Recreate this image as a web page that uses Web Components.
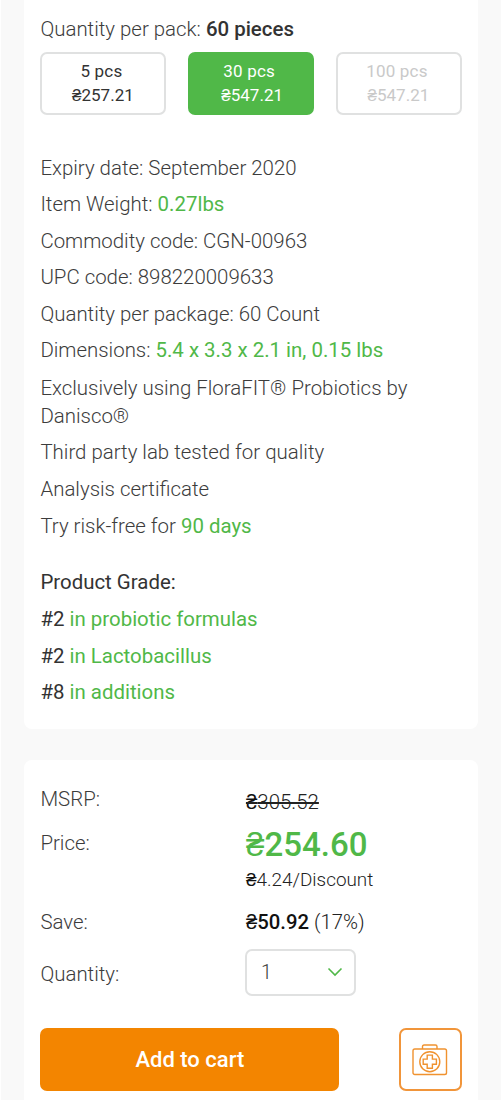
<!DOCTYPE html>
<html lang="en">
<head>
<meta charset="utf-8">
<title>Product details</title>
<style>
html,body{margin:0;padding:0}
body{height:1100px;overflow:hidden;background:#f9f9f9;font-family:Roboto,"Liberation Sans",sans-serif}
</style>
</head>
<body>
<product-page></product-page>
<script>
const define=(name,html)=>{
  const t=document.createElement('template');
  t.innerHTML=html;
  customElements.define(name,class extends HTMLElement{
    constructor(){super();this.attachShadow({mode:'open'}).append(t.content.cloneNode(true));}
  });
};

define('ui-card',`<style>
:host{display:block;flex:none;box-sizing:border-box;background:#fff;border-radius:8px;padding:0 16.4px}
</style><slot></slot>`);

define('pack-option',`<style>
:host{display:flex;flex-direction:column;align-items:center;justify-content:center;box-sizing:border-box;width:126px;height:63px;border:2px solid #e0e1e1;border-radius:7px;font-size:17px;line-height:24px;color:#333;padding-bottom:2px}
:host([state=active]){background:#50b848;border-color:#50b848;color:#fff}
:host([state=disabled]){color:#c9c9c9}
.count{letter-spacing:.2px;padding-right:4px}
.price{padding-right:1px}
:host([state=active]) .price{padding:0 0 0 2px}
</style><span class="count"><slot name="count"></slot></span><span class="price"><slot></slot></span>`);

define('spec-line',`<style>
:host{display:block;font-size:20.43px;line-height:28px;font-weight:300;color:#3c3c3c}
:host([strong]){font-weight:400;color:#333}
::slotted(em){font-style:normal;font-weight:400;color:#50b848}
::slotted(b){font-weight:500;color:#333}
</style><slot></slot>`);

define('price-row',`<style>
:host{display:grid;grid-template-columns:205px 1fr;align-items:start;font-size:20.43px;line-height:28px;font-weight:300;color:#3c3c3c}
</style><span><slot name="label"></slot></span><div><slot></slot></div>`);

define('qty-select',`<style>
:host{display:flex;align-items:center;justify-content:space-between;box-sizing:border-box;width:111px;height:47px;border:2px solid #e0e1e1;border-radius:7px;padding:0 11px 0 13.5px;font-size:19.5px;color:#3c3c3c}
svg{display:block;margin-bottom:1px}
</style><slot></slot><svg width="16" height="10" viewBox="0 0 16 10" fill="none" stroke="#50b848" stroke-width="1.6"><path d="M1.5 1.5 8 8 14.5 1.5"/></svg>`);

define('cart-button',`<style>
:host{display:flex;align-items:center;justify-content:center;width:299px;height:63px;border-radius:7px;background:#f38500;color:#fff;font-size:22px;font-weight:500}
</style><slot></slot>`);

define('kit-button',`<style>
:host{display:flex;align-items:center;justify-content:center;box-sizing:border-box;width:63px;height:63px;border:2px solid #f1953a;border-radius:7px}
svg{display:block}
</style><svg width="36" height="32" viewBox="0 0 36 32" fill="none" stroke="#f0922f" stroke-width="1.4">
<rect x="1" y="5" width="33.5" height="25.5" rx="1.8"/>
<path d="M10.5 5V2.6Q10.5 1 12.1 1H23.4Q25 1 25 2.6V5"/>
<circle cx="17.8" cy="17.7" r="10"/>
<path d="M15.2 11.1h5.2v4h4v5.2h-4v4h-5.2v-4h-4v-5.2h4z"/>
</svg>`);

define('product-page',`<style>
:host{display:flex;flex-direction:column;gap:31px;box-sizing:border-box;height:1100px;padding:0 22.8px 0 23px;border-left:1px solid #fff}
.info{height:729px;border-radius:0 0 8px 8px;padding-top:15px}
.options{display:flex;justify-content:space-between;width:421.5px;margin-top:9px}
.specs{display:grid;gap:8px;margin-top:39px}
.grades{display:grid;gap:9px;margin-top:28px}
.s1{margin-top:1px}.s2{margin-top:2px}.u1{margin-top:-1px}
.buy{height:352px;border-radius:8px 8px 0 0;padding-top:25px}
.money{color:#222;display:block;margin-left:.6px}
.money b{font-weight:500;color:#111}
.msrp{text-decoration:line-through;text-decoration-thickness:1.5px;padding-top:3px}
.unit{font-size:18.9px;margin-top:5px}
.save{font-size:20.3px}
.price{display:block;color:#50b848;font-size:33px;font-weight:500;line-height:32px;margin-left:.6px;letter-spacing:.05px}
.r2{margin-top:13px}.r3{margin-top:14px}.r4{margin-top:13px;align-items:center}
.qty{display:block;padding-top:2px}
.actions{display:flex;justify-content:space-between;width:421.5px;margin-top:32px}
</style>
<ui-card class="info">
<spec-line>Quantity per pack: <b>60 pieces</b></spec-line>
<div class="options">
<pack-option><span slot="count">5 pcs</span><span>₴257.21</span></pack-option>
<pack-option state="active"><span slot="count">30 pcs</span><span>₴547.21</span></pack-option>
<pack-option state="disabled"><span slot="count">100 pcs</span><span>₴547.21</span></pack-option>
</div>
<div class="specs">
<spec-line>Expiry date: September 2020</spec-line>
<spec-line>Item Weight: <em>0.27lbs</em></spec-line>
<spec-line class="s1">Commodity code: CGN-00963</spec-line>
<spec-line>UPC code: 898220009633</spec-line>
<spec-line class="s1">Quantity per package: 60 Count</spec-line>
<spec-line>Dimensions: <em>5.4 x 3.3 x 2.1 in, 0.15 lbs</em></spec-line>
<spec-line class="s2">Exclusively using FloraFIT® Probiotics by Danisco®</spec-line>
<spec-line>Third party lab tested for quality</spec-line>
<spec-line class="s1">Analysis certificate</spec-line>
<spec-line class="s1">Try risk-free for <em>90 days</em></spec-line>
</div>
<div class="grades">
<spec-line strong>Product Grade:</spec-line>
<spec-line strong>#2 <em>in probiotic formulas</em></spec-line>
<spec-line strong>#2 <em>in Lactobacillus</em></spec-line>
<spec-line strong class="u1">#8 <em>in additions</em></spec-line>
</div>
</ui-card>
<ui-card class="buy">
<price-row><span slot="label">MSRP:</span><span class="money msrp"><b>₴</b>305.52</span></price-row>
<price-row class="r2"><span slot="label">Price:</span><span class="price">₴254.60</span><span class="money unit"><b>₴</b>4.24/Discount</span></price-row>
<price-row class="r3"><span slot="label">Save:</span><span class="money save"><b>₴50.92</b> (17%)</span></price-row>
<price-row class="r4"><span slot="label" class="qty">Quantity:</span><qty-select>1</qty-select></price-row>
<div class="actions"><cart-button>Add to cart</cart-button><kit-button></kit-button></div>
</ui-card>`);
</script>
</body>
</html>
